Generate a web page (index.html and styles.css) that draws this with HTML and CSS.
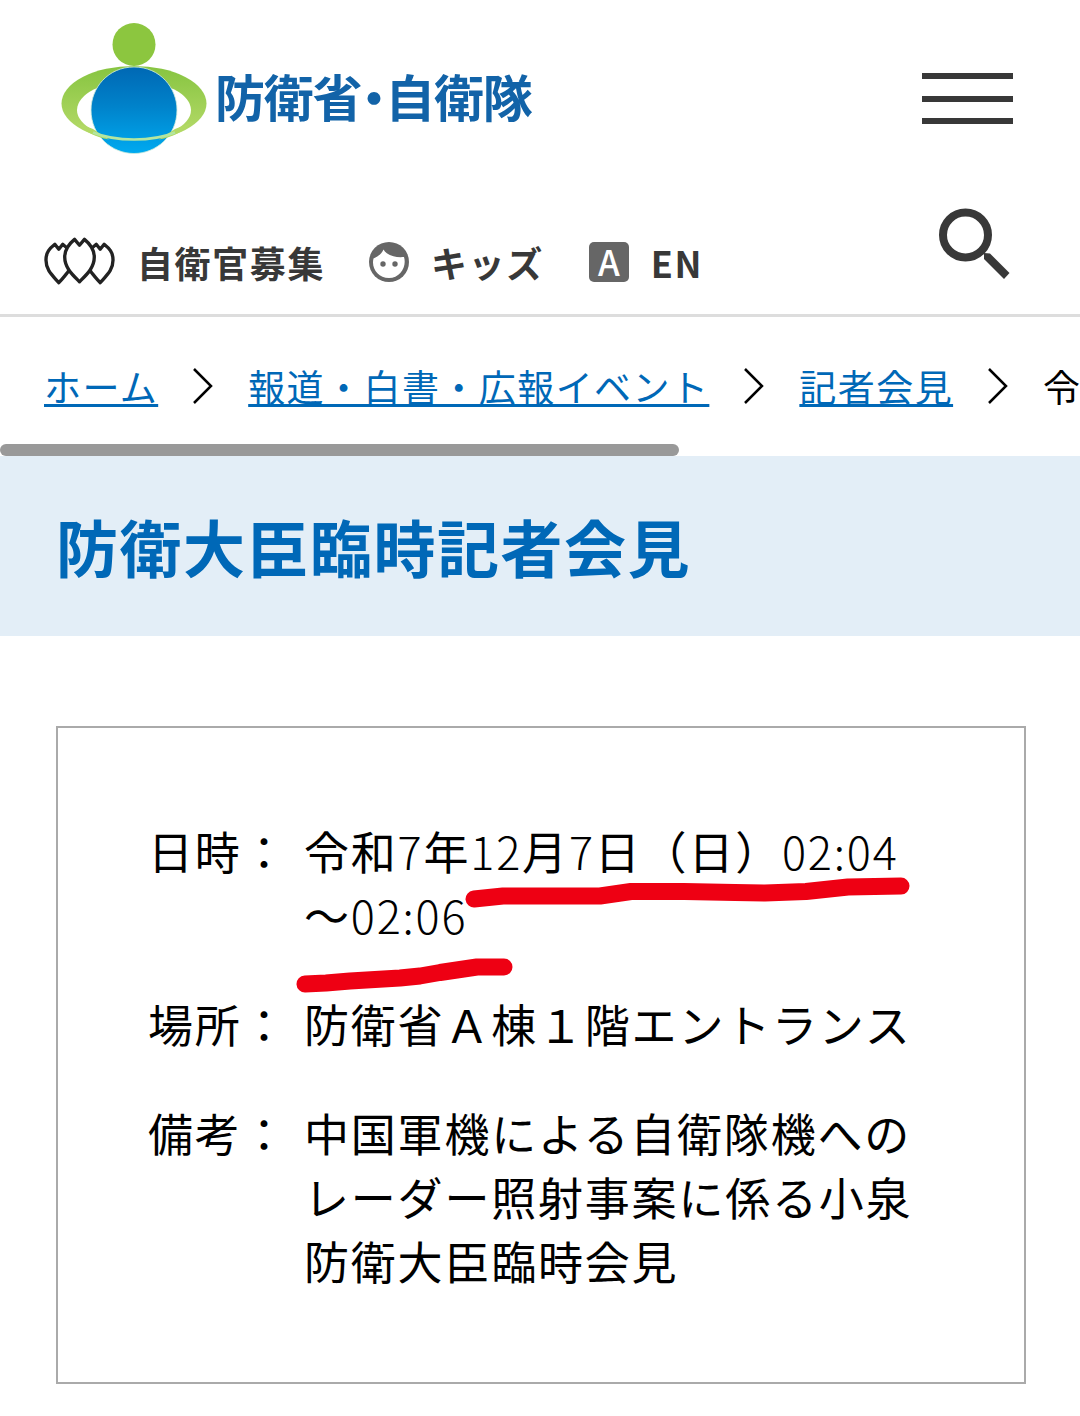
FILE: index.html
```html
<!DOCTYPE html>
<html lang="ja">
<head>
  <meta charset="UTF-8">
  <meta name="viewport" content="width=device-width, initial-scale=1.0">
  <title>防衛省・自衛隊</title>
  <link rel="stylesheet" href="styles.css">
</head>
<body>

  <header class="header">
    <div class="header-top">
      <a class="logo" href="#">
        <svg class="logo-mark" width="148" height="136" viewBox="60 20 148 136">
          <defs>
            <linearGradient id="globe" x1="0" y1="0" x2="0" y2="1">
              <stop offset="0" stop-color="#0068b4"/>
              <stop offset="0.45" stop-color="#0082ca"/>
              <stop offset="1" stop-color="#00aaf0"/>
            </linearGradient>
            <linearGradient id="ring" x1="0" y1="0" x2="0" y2="1">
              <stop offset="0" stop-color="#86c440"/>
              <stop offset="1" stop-color="#b9dc6c"/>
            </linearGradient>
          </defs>
          <ellipse cx="134" cy="103.500" rx="72.500" ry="37.500" fill="url(#ring)"/>
          <ellipse cx="134" cy="110" rx="57" ry="29" fill="#fff"/>
          <path fill="url(#ring)" d="M100 84L116 68H152L168 84Z"/>
          <path fill="url(#globe)" stroke="#d3eedd" stroke-width="0.800" d="M134 67C108 67 91 88 91 110C91 136 112 153.500 134 153.500C156 153.500 177 136 177 110C177 88 160 67 134 67Z"/>
          <path fill="#fff" d="M80 130Q92 135 101 138L106 145L84 145ZM188 130Q176 135 167 138L162 145L184 145Z"/>
          <path fill="#b2d964" d="M77 123C83 131 95 137 109 139.500L93 129ZM191 123C185 131 173 137 159 139.500L175 129Z"/>
          <path fill="none" stroke="#b4e6a0" stroke-width="2.500" d="M93 132.500Q110 139.500 134 139.500T175 132.500"/>
          <circle cx="134" cy="44.500" r="21.500" fill="#8cc63f"/>
        </svg>
        <span class="logo-text">防衛省・自衛隊</span>
      </a>
      <div class="menu-button">
        <span class="menu-bar"></span>
        <span class="menu-bar"></span>
        <span class="menu-bar"></span>
      </div>
    </div>

    <nav class="header-nav">
      <a class="nav-item" href="#">
        <svg class="icon-petals" width="72" height="50" viewBox="0 0 72 50">
          <g fill="#fff" stroke="#222" stroke-width="3.400" stroke-linejoin="round">
            <path d="M15 46C8 38 2 33 2 23C2 15 6 11 11 7L15 12L19 7C24 11 28 15 28 23C28 33 22 38 15 46Z"/>
            <path d="M57 46C50 38 44 33 44 23C44 15 48 11 53 7L57 12L61 7C66 11 70 15 70 23C70 33 64 38 57 46Z"/>
            <path d="M36 45C29 38 21 31 21 20C21 11 26 6 31 2L36 8L41 2C46 6 51 11 51 20C51 31 43 38 36 45Z"/>
          </g>
        </svg>
        <span>自衛官募集</span>
      </a>
      <a class="nav-item nav-kids" href="#">
        <svg class="icon-face" width="40" height="40" viewBox="0 0 40 40">
          <circle cx="20" cy="20" r="20" fill="#666"/>
          <path fill="#fff" d="M14.500 7.500C17 12 24 16 35 15C38 25 31 36 20 36C9 36 2 26 4.500 16.500C9 14.500 12.500 12 14.500 7.500Z"/>
          <circle cx="14" cy="22" r="2.700" fill="#666"/>
          <circle cx="26" cy="22" r="2.700" fill="#666"/>
        </svg>
        <span>キッズ</span>
      </a>
      <a class="nav-item nav-en" href="#">
        <span class="icon-lang">A</span>
        <span>EN</span>
      </a>
      <svg class="icon-search" width="72" height="72" viewBox="0 0 72 72">
        <circle cx="27.500" cy="27" r="22.500" fill="none" stroke="#383838" stroke-width="8"/>
        <path fill="#383838" d="M46 45L52 45.500L71.500 65L66 71L46 51Z"/>
      </svg>
    </nav>
  </header>

  <div class="breadcrumb">
    <a href="#">ホーム</a>
    <svg class="chevron" width="22" height="38" viewBox="0 0 22 38"><path d="M2 2L19 19L2 36"/></svg>
    <a href="#">報道・白書・広報イベント</a>
    <svg class="chevron" width="22" height="38" viewBox="0 0 22 38"><path d="M2 2L19 19L2 36"/></svg>
    <a href="#">記者会見</a>
    <svg class="chevron" width="22" height="38" viewBox="0 0 22 38"><path d="M2 2L19 19L2 36"/></svg>
    <span>令</span>
  </div>
  <div class="scrollbar"><div class="scrollbar-thumb"></div></div>

  <div class="title-area">
    <h1>防衛大臣臨時記者会見</h1>
  </div>

  <main class="info-box">
    <dl class="info-row">
      <dt>日時：</dt>
      <dd>令和<span class="num">7</span>年<span class="num">12</span>月<span class="num">7</span>日（日）<span class="num">02:04</span><br>～<span class="num">02:06</span></dd>
    </dl>
    <dl class="info-row">
      <dt>場所：</dt>
      <dd>防衛省Ａ棟１階エントランス</dd>
    </dl>
    <dl class="info-row">
      <dt>備考：</dt>
      <dd>中国軍機による自衛隊機への<br>レーダー照射事案に係る小泉<br>防衛大臣臨時会見</dd>
    </dl>
    <!-- marker lines under the date and time -->
    <svg class="marker" width="640" height="130" viewBox="290 870 640 130">
      <path d="M474 899L503 896H600L631 891.500H684L735 892.500L765 893L806 891.500L848 887L901 886"/>
      <path d="M305 984L326 983L350 981L400 978L420 976L440 972.500L477 967H504"/>
    </svg>
  </main>

</body>
</html>
```
FILE: styles.css
```css
* {
  box-sizing: border-box;
}
body {
  margin: 0;
  height: 1416px;
  overflow: hidden;
  background-color: #fff;
  color: #000;
  font-family: "Noto Sans CJK JP", sans-serif;
}
a {
  color: #0068b7;
}
.header {
  height: 317px;
  border-bottom: 3px solid #ddd;
}
.header-top {
  display: flex;
  justify-content: space-between;
  height: 200px;
  padding: 20px 67px 0 60px;
}
.logo {
  display: flex;
  text-decoration: none;
  color: #1263a8;
}
.logo-text {
  margin: 37px 0 0 7px;
  font-size: 50px;
  font-weight: bold;
  line-height: 76px;
  letter-spacing: -1.2px;
  font-feature-settings: "halt";
}
.menu-button {
  display: flex;
  flex-direction: column;
  gap: 16.5px;
  width: 91px;
  padding-top: 53px;
}
.menu-bar {
  height: 6px;
  background-color: #383838;
}
.header-nav {
  display: flex;
  align-items: center;
  height: 114px;
  padding: 9px 70px 0 44px;
}
.nav-item {
  display: flex;
  align-items: center;
  color: #383838;
  font-size: 36px;
  font-weight: bold;
  line-height: 54px;
  letter-spacing: 1.6px;
  text-decoration: none;
}
.icon-petals {
  margin: 0 22px 0 -1px;
  padding-left: 1px;
}
.nav-kids {
  margin-left: 44px;
}
.icon-face {
  margin-right: 22px;
}
.nav-en {
  margin-left: 45px;
}
.icon-lang {
  width: 40px;
  height: 40px;
  margin-right: 22px;
  border-radius: 5px;
  background-color: #666;
  color: #fff;
  font-size: 35px;
  font-weight: 500;
  line-height: 38px;
  letter-spacing: 0;
  text-align: center;
}
.icon-search {
  margin: -35px 0 0 auto;
}
.breadcrumb {
  display: flex;
  align-items: center;
  height: 127px;
  padding: 10px 0 0 44px;
  font-size: 37px;
  line-height: 56px;
  letter-spacing: 1.43px;
  white-space: nowrap;
}
.breadcrumb a {
  text-decoration-thickness: 3px;
  text-underline-offset: 2px;
  text-decoration-skip-ink: none;
}
.chevron {
  flex: none;
  margin: 0 34px 0 34px;
  fill: none;
  stroke: #000;
  stroke-width: 2.5;
}
.scrollbar-thumb {
  width: 679px;
  height: 12px;
  border-radius: 6px;
  background-color: #999;
}
.title-area {
  height: 180px;
  padding: 44px 56px;
  background-color: #e3eef7;
}
h1 {
  margin: 0;
  color: #0068b7;
  font-size: 62px;
  line-height: 92px;
  letter-spacing: 1.5px;
}
.info-box {
  position: relative;
  width: 970px;
  height: 658px;
  margin: 90px 0 0 56px;
  padding: 91px 0 0 90px;
  border: 2px solid #aaa;
}
.info-row {
  display: flex;
  margin: 0 0 45px;
  font-size: 45px;
  line-height: 64px;
  letter-spacing: 1.8px;
}
dt {
  width: 156px;
}
dd {
  margin: 0;
  white-space: nowrap;
}
.num {
  font-weight: 200;
}
.marker {
  position: absolute;
  top: 142px;
  left: 232px;
  fill: none;
  stroke: #ee0013;
  stroke-width: 17;
  stroke-linecap: round;
  stroke-linejoin: round;
}
```
